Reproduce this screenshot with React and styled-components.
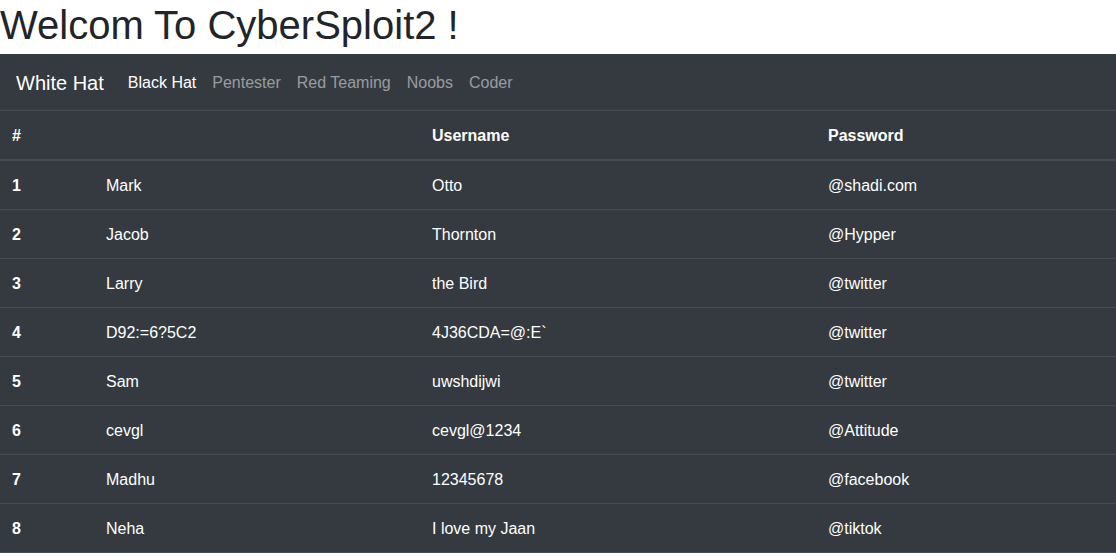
import React from 'react';
import styled, { createGlobalStyle } from 'styled-components';

const GlobalStyle = createGlobalStyle`
  body {
    margin: 0;
    font-family: "Liberation Sans", Arial, sans-serif;
    font-size: 16px;
    line-height: 1.5;
    color: #212529;
    background: #fff;
  }
`;

const Title = styled.h1`
  margin: 0 0 6px;
  padding-top: 1px;
  height: 47px;
  font-size: 40px;
  font-weight: 500;
  line-height: 1.2;
  color: #212529;
`;

const Navbar = styled.nav`
  display: flex;
  align-items: center;
  padding: 8px 16px;
  background-color: #343a40;
`;

const Brand = styled.a`
  padding: 6px 0 4px;
  margin-right: 16px;
  font-size: 20px;
  line-height: 30px;
  color: #fff;
  text-decoration: none;
`;

const NavList = styled.ul`
  display: flex;
  margin: 0;
  padding: 0;
  list-style: none;
`;

const NavLink = styled.a`
  display: block;
  padding: 9px 8px 7px;
  color: ${props => (props.active ? '#fff' : 'rgba(255, 255, 255, 0.5)')};
  text-decoration: none;
`;

const Table = styled.table`
  width: 100%;
  border-collapse: collapse;
  background-color: #343a40;
  color: #fff;
  border-bottom: 1px solid #454d55;
`;

const Col = styled.col`
  width: ${props => props.width}px;
`;

const HeadCell = styled.th`
  padding: 13px 12px 11px;
  text-align: left;
  font-weight: 700;
  border-top: 1px solid #454d55;
  border-bottom: 2px solid #454d55;
`;

const RowHead = styled.th`
  padding: 13px 12px 11px;
  text-align: left;
  font-weight: 700;
  border-top: 1px solid #454d55;
`;

const Cell = styled.td`
  padding: 13px 12px 11px;
  border-top: 1px solid #454d55;
`;

const links = ['Black Hat', 'Pentester', 'Red Teaming', 'Noobs', 'Coder'];

const rows = [
  ['Mark', 'Otto', '@shadi.com'],
  ['Jacob', 'Thornton', '@Hypper'],
  ['Larry', 'the Bird', '@twitter'],
  ['D92:=6?5C2', '4J36CDA=@:E`', '@twitter'],
  ['Sam', 'uwshdijwi', '@twitter'],
  ['cevgl', 'cevgl@1234', '@Attitude'],
  ['Madhu', '12345678', '@facebook'],
  ['Neha', 'I love my Jaan', '@tiktok'],
];

export default function App() {
  return (
    <>
      <GlobalStyle />
      <Title>Welcom To CyberSploit2 !</Title>
      <Navbar>
        <Brand href="#">White Hat</Brand>
        <NavList>
          {links.map((l, i) => (
            <li key={l}>
              <NavLink href="#" active={i === 0 ? 1 : 0}>{l}</NavLink>
            </li>
          ))}
        </NavList>
      </Navbar>
      <Table>
        <colgroup>
          <Col width={94} />
          <Col width={326} />
          <Col width={396} />
          <Col width={300} />
        </colgroup>
        <thead>
          <tr>
            <HeadCell>#</HeadCell>
            <HeadCell></HeadCell>
            <HeadCell>Username</HeadCell>
            <HeadCell>Password</HeadCell>
          </tr>
        </thead>
        <tbody>
          {rows.map((r, i) => (
            <tr key={i}>
              <RowHead>{i + 1}</RowHead>
              <Cell>{r[0]}</Cell>
              <Cell>{r[1]}</Cell>
              <Cell>{r[2]}</Cell>
            </tr>
          ))}
        </tbody>
      </Table>
    </>
  );
}
